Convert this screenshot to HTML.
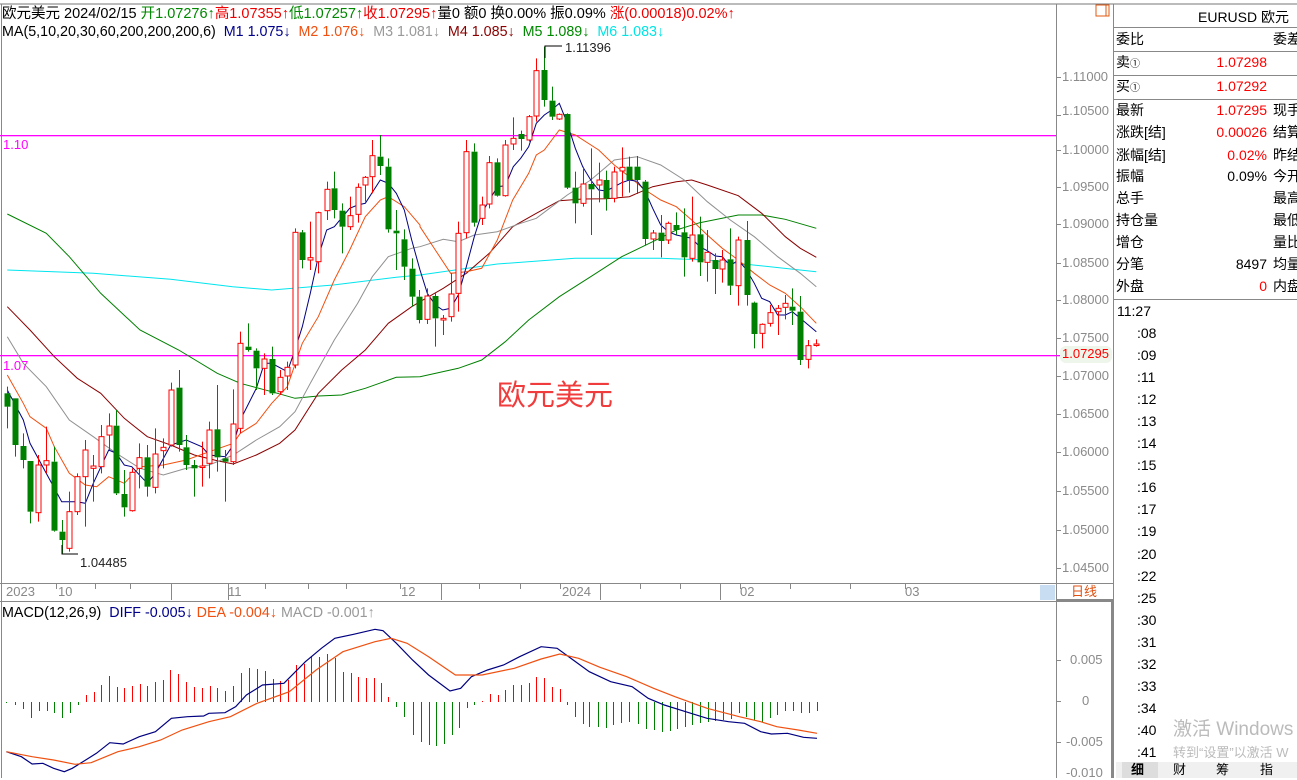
<!DOCTYPE html>
<html><head><meta charset="utf-8"><style>
*{margin:0;padding:0}
body{width:1297px;height:778px;background:#fff;overflow:hidden;position:relative;font-family:"Liberation Sans","Noto Sans CJK SC",sans-serif;font-size:13px;color:#000}
div{white-space:nowrap}
.a{position:absolute;white-space:nowrap;line-height:14px}
.ax{position:absolute;left:1062px;color:#8a8a8a;font-size:13px;line-height:14px}
.rp{position:absolute;left:1116px;font-size:14px;line-height:16px}
.rv{position:absolute;right:30px;font-size:14px;line-height:16px;text-align:right}
.rc{position:absolute;left:1273px;font-size:14px;line-height:16px;white-space:nowrap}
.t{position:absolute;left:1137px;font-size:14px;line-height:16px}
</style></head><body>
<svg id="sv" width="1297" height="778" style="position:absolute;left:0;top:0">
<line x1="0" y1="4" x2="1297" y2="4" stroke="#777" stroke-width="1"/>
<line x1="1.5" y1="4" x2="1.5" y2="778" stroke="#888"/>
<line x1="1056.5" y1="4" x2="1056.5" y2="778" stroke="#888"/>
<line x1="1113.5" y1="4" x2="1113.5" y2="778" stroke="#888"/>
<line x1="1113" y1="27.5" x2="1297" y2="27.5" stroke="#888"/>
<line x1="1113" y1="51.5" x2="1297" y2="51.5" stroke="#888"/>
<line x1="1113" y1="75.5" x2="1297" y2="75.5" stroke="#888"/>
<line x1="1113" y1="99.5" x2="1297" y2="99.5" stroke="#888"/>
<line x1="1113" y1="299.5" x2="1297" y2="299.5" stroke="#888"/>
<rect x="1096" y="5" width="13" height="11" fill="none" stroke="#e05a10"/>
<line x1="1106" y1="5" x2="1106" y2="16" stroke="#e05a10"/>
<line x1="0" y1="583.5" x2="1113" y2="583.5" stroke="#888"/>
<line x1="0" y1="601.5" x2="1113" y2="601.5" stroke="#888"/>
<line x1="1056" y1="600" x2="1113" y2="600" stroke="#888" stroke-width="2"/>
<line x1="1112" y1="600" x2="1112" y2="778" stroke="#888" stroke-width="2"/>
<rect x="1040" y="585" width="15" height="15" fill="#c9ddf2"/>
<rect x="0" y="135" width="1056" height="1.3" style="fill:#ff00ff"/>
<rect x="0" y="355" width="1062" height="1.3" style="fill:#ff00ff"/>
<rect x="1060" y="346" width="52" height="17" rx="6" fill="#eef5ea"/>
<g id="ticks" stroke="#888"></g>
<g id="ma" fill="none" stroke-width="1"></g>
<g id="cd"></g>
<g id="mc"></g>
<polyline points="545,58 545,46 562,46" fill="none" stroke="#000"/>
<polyline points="62,545 62,554 78,554" fill="none" stroke="#000"/>
<rect x="1116" y="762" width="181" height="16" fill="#f0f0f0"/>
<rect x="1122" y="762" width="36" height="16" fill="#ddd"/>
</svg>
<div class="a" style="left:2px;top:6px;font-size:14.5px;line-height:16px">欧元美元 2024/02/15 <span style="color:#080">开1.07276↑</span><span style="color:#e00">高1.07355↑</span><span style="color:#080">低1.07257↑</span><span style="color:#e00">收1.07295↑</span>量0 额0 换0.00% 振0.09% <span style="color:#e00">涨(0.00018)0.02%↑</span></div>
<div class="a" style="left:2px;top:24px;font-size:14.3px;line-height:16px">MA(5,10,20,30,60,200,200,200,6) &nbsp;<span style="color:#00008b">M1 1.075↓</span> &nbsp;<span style="color:#f05010">M2 1.076↓</span> &nbsp;<span style="color:#999">M3 1.081↓</span> &nbsp;<span style="color:#8b0000">M4 1.085↓</span> &nbsp;<span style="color:#080">M5 1.089↓</span> &nbsp;<span style="color:#00e5e5">M6 1.083↓</span></div>
<div class="a" style="left:565px;top:41px;color:#222">1.11396</div>
<div class="a" style="left:80px;top:556px;color:#222">1.04485</div>
<div class="a" style="left:3px;top:138px;color:#ff00ff">1.10</div>
<div class="a" style="left:3px;top:359px;color:#ff00ff">1.07</div>
<div class="a" style="left:497px;top:380px;color:#f03c3c;font-size:29px;line-height:32px">欧元美元</div>
<div class="ax" style="top:70px">1.11000</div><div class="ax" style="top:104px">1.10500</div><div class="ax" style="top:143px">1.10000</div><div class="ax" style="top:180px">1.09500</div><div class="ax" style="top:217px">1.09000</div><div class="ax" style="top:256px">1.08500</div><div class="ax" style="top:293px">1.08000</div><div class="ax" style="top:331px">1.07500</div><div class="ax" style="top:347px;color:#f00">1.07295</div><div class="ax" style="top:369px">1.07000</div><div class="ax" style="top:407px">1.06500</div><div class="ax" style="top:445px">1.06000</div><div class="ax" style="top:484px">1.05500</div><div class="ax" style="top:523px">1.05000</div><div class="ax" style="top:561px">1.04500</div>
<div class="a" style="left:1071px;top:585px;color:#e05010">日线</div>
<div class="ax" style="left:1070px;top:653px">0.005</div><div class="ax" style="left:1082px;top:694px">0</div><div class="ax" style="left:1066px;top:735px">-0.005</div><div class="ax" style="left:1066px;top:766px">-0.010</div>
<div class="a" style="left:6px;top:585px;color:#888">2023</div><div class="a" style="left:58px;top:585px;color:#888">10</div><div class="a" style="left:228px;top:585px;color:#888">11</div><div class="a" style="left:401px;top:585px;color:#888">12</div><div class="a" style="left:562px;top:585px;color:#888">2024</div><div class="a" style="left:740px;top:585px;color:#888">02</div><div class="a" style="left:905px;top:585px;color:#888">03</div>
<div class="a" style="left:2px;top:605px;font-size:14.3px;line-height:16px">MACD(12,26,9) &nbsp;<span style="color:#00008b">DIFF -0.005↓</span> <span style="color:#f05010">DEA -0.004↓</span> <span style="color:#999">MACD -0.001↑</span></div>
<div class="a" style="left:1198px;top:9px;font-size:14px;line-height:16px">EURUSD 欧元</div>
<div class="rp" style="top:31px">委比</div><div class="rc" style="top:31px">委差</div>
<div class="rp" style="top:54px">卖<span style="font-size:10px">①</span></div><div class="rv" style="top:54px;color:#f00">1.07298</div>
<div class="rp" style="top:78px">买<span style="font-size:10px">①</span></div><div class="rv" style="top:78px;color:#f00">1.07292</div>
<div class="rp" style="top:102px">最新</div><div class="rv" style="top:102px;color:#f00">1.07295</div><div class="rc" style="top:102px">现手</div>
<div class="rp" style="top:124px">涨跌[结]</div><div class="rv" style="top:124px;color:#f00">0.00026</div><div class="rc" style="top:124px">结算</div>
<div class="rp" style="top:147px">涨幅[结]</div><div class="rv" style="top:147px;color:#f00">0.02%</div><div class="rc" style="top:147px">昨结</div>
<div class="rp" style="top:168px">振幅</div><div class="rv" style="top:168px">0.09%</div><div class="rc" style="top:168px">今开</div>
<div class="rp" style="top:190px">总手</div><div class="rc" style="top:190px">最高</div>
<div class="rp" style="top:212px">持仓量</div><div class="rc" style="top:212px">最低</div>
<div class="rp" style="top:234px">增仓</div><div class="rc" style="top:234px">量比</div>
<div class="rp" style="top:256px">分笔</div><div class="rv" style="top:256px">8497</div><div class="rc" style="top:256px">均量</div>
<div class="rp" style="top:278px">外盘</div><div class="rv" style="top:278px;color:#f00">0</div><div class="rc" style="top:278px">内盘</div>
<div class="rp" style="left:1117px;top:303px">11:27</div>
<div id="tl"></div>
<div class="a" style="left:1173px;top:719px;color:#bbb;font-size:19px;line-height:22px">激活 Windows</div>
<div class="a" style="left:1173px;top:746px;color:#bbb;font-size:13px">转到“设置”以激活 W</div>
<div class="a" style="left:1131px;top:763px;font-size:13px;font-weight:bold">细</div>
<div class="a" style="left:1173px;top:763px;font-size:13px">财</div>
<div class="a" style="left:1216px;top:763px;font-size:13px">筹</div>
<div class="a" style="left:1260px;top:763px;font-size:13px">指</div>
<script>
var NS="http://www.w3.org/2000/svg";
function el(p,t,a){var e=document.createElementNS(NS,t);for(var k in a)e.setAttribute(k,a[k]);p.appendChild(e);return e;}
var tl=["08","09","11","12","13","14","15","16","17","19","20","22","25","30","31","32","33","34","40","41"],h="";
tl.forEach(function(s,i){h+='<div class="t" style="top:'+(325+i*22.05)+'px">:'+s+'</div>';});
document.getElementById("tl").innerHTML=h;
var tk=document.getElementById("ticks");
[77,115,150,187,224,263,300,338,376,414,452,491,530,568].forEach(function(y){el(tk,"line",{x1:1056,y1:y+.5,x2:1061,y2:y+.5});});
[660,701,742].forEach(function(y){el(tk,"line",{x1:1056,y1:y+.5,x2:1061,y2:y+.5});});
[56,95,130,171,228,265,308,346,400,441,479,520,560,600,640,680,720,740,790,850,905].forEach(function(x){el(tk,"line",{x1:x+.5,y1:584,x2:x+.5,y2:x%3==0?600:589});});
var A=[[22,0,1060,1100,1040,1165],[46,0,1075,1215,1075,1250],[70,0,1218,1260,1180,1285],[91,0,1263,1415,1263,1450],[115,1,1275,1418,1245,1445],[139,1,1262,1275,1160,1300],[163,0,1265,1472,1220,1475],[185,0,1475,1500,1440,1540],[208,1,1415,1525,1355,1535],[232,1,1310,1415,1300,1425],[256,1,1230,1310,1200,1460],[280,1,1278,1285,1245,1385],[302,1,1190,1280,1155,1300],[326,1,1158,1185,1120,1230],[349,0,1157,1360,1110,1365],[373,0,1362,1402,1290,1430],[395,1,1297,1412,1285,1415],[418,1,1253,1285,1210,1345],[442,0,1252,1340,1215,1370],[466,1,1242,1342,1165,1360],[490,1,1222,1232,1195,1285],[512,1,1050,1215,1028,1220],[536,0,1043,1215,990,1235],[559,0,1222,1275,1185,1290],[583,0,1275,1285,1260,1370],[605,1,1278,1282,1205,1340],[628,1,1170,1270,1145,1315],[652,0,1168,1252,1035,1295],[676,0,1255,1265,1230,1385],[700,1,1152,1265,1048,1275],[721,1,910,1165,875,1180],[745,0,920,930,850,935],[769,0,932,985,925,1050],[793,1,957,985,940,1065],[815,0,957,1060,920,1065],[839,1,1012,1055,990,1065],[862,1,982,1008,965,1050],[885,1,577,975,565,985],[907,0,577,660,570,685],[931,1,653,660,545,690],[955,1,518,665,515,700],[980,1,448,512,425,540],[1003,0,445,510,395,535],[1025,0,512,560,490,640],[1049,1,527,560,470,570],[1073,1,442,523,430,548],[1096,1,412,435,408,485],[1117,1,347,410,300,460],[1141,0,350,378,285,405],[1165,0,380,568,355,578],[1189,0,572,580,510,690],[1213,0,598,680,568,720],[1235,0,686,770,655,800],[1256,0,770,840,750,850]];
var B=[[22,1,768,838,745,852],[46,0,768,835,760,920],[68,1,835,840,825,885],[92,1,762,830,700,845],[115,1,580,760,545,815],[139,1,335,578,300,595],[163,0,335,548,310,560],[185,1,495,535,470,555],[208,1,368,492,348,505],[232,0,367,467,355,470],[256,1,315,467,300,470],[278,1,295,312,232,330],[302,0,282,297,272,332],[326,1,230,300,225,305],[349,1,92,228,55,245],[373,0,90,180,20,200],[395,0,182,230,140,240],[418,1,223,237,220,240],[442,0,222,443,220,447],[466,0,443,490,395,550],[488,1,432,490,380,500],[512,0,432,448,325,585],[536,1,420,435,368,487],[559,0,420,475,392,512],[583,1,396,475,380,487],[605,1,382,393,322,470],[628,0,380,420,350,458],[652,0,380,420,348,462],[676,0,425,597,420,617],[698,1,579,597,570,630],[722,0,578,603,525,652],[745,1,550,600,545,612],[769,0,555,570,517,585],[793,0,577,652,505,710],[815,1,585,655,470,665],[839,0,583,667,530,708],[862,1,637,667,570,725],[886,0,660,687,640,762],[907,1,660,687,630,728],[931,0,658,737,565,765],[955,1,600,737,590,797],[980,0,600,765,543,797],[1003,0,788,882,785,925],[1025,1,853,880,850,925],[1049,1,818,850,795,860],[1073,1,805,815,795,885],[1096,1,790,802,765,838],[1117,0,800,812,745,855],[1141,0,815,960,768,975],[1165,1,917,958,900,985],[1189,1,912,915,898,920]];
var cd=document.getElementById("cd");
function draw(arr,ox){arr.forEach(function(c){var x=Math.round(ox+c[0]/3)+.5,bt=40+c[2]/3,bb=40+c[3]/3,wt=40+c[4]/3,wb=40+c[5]/3;
var col=c[1]?"#ff0000":"#008000";
el(cd,"line",{x1:x,y1:wt,x2:x,y2:bt,stroke:col});el(cd,"line",{x1:x,y1:bb,x2:x,y2:wb,stroke:col});
if(bb-bt<1.5)bb=bt+1.5;
if(c[1])el(cd,"rect",{x:x-2.5,y:bt,width:5,height:bb-bt,fill:"#fff",stroke:col});else el(cd,"rect",{x:x-3,y:bt,width:6,height:bb-bt,fill:col});});}
draw(A,0);draw(B,420);
var ma=document.getElementById("ma");
function pl(a,b,col){var p=[];a.forEach(function(q){p.push((q[0]/3).toFixed(1)+","+(40+q[1]/3).toFixed(1));});b.forEach(function(q){p.push((420+q[0]/3).toFixed(1)+","+(40+q[1]/3).toFixed(1));});el(ma,"polyline",{points:p.join(" "),stroke:col});}
pl([[22,690],[280,700],[512,718],[698,740],[815,750],[1000,735],[1189,712],[1260,705]],[[0,705],[232,672],[465,655],[720,655],[860,660],[1000,675],[1189,695]],"#00e5ee");
pl([[22,522],[139,580],[208,650],[302,760],[420,870],[536,930],[652,1000],[721,1030],[815,1055],[885,1075],[955,1068],[1025,1065],[1096,1045],[1189,1012],[1260,1010]],[[0,1010],[115,985],[185,960],[256,905],[326,840],[418,770],[512,710],[605,650],[698,605],[769,570],[839,548],[955,525],[1025,525],[1096,538],[1189,565]],"#008000");
pl([[22,800],[90,870],[163,950],[232,1015],[302,1060],[373,1135],[442,1190],[512,1215],[583,1245],[652,1262],[700,1272],[769,1245],[839,1210],[885,1170],[955,1060],[1025,990],[1096,930],[1165,850],[1235,800],[1260,785]],[[0,785],[70,745],[139,700],[208,640],[278,560],[349,520],[418,482],[488,477],[559,476],[628,470],[698,440],[769,425],[815,420],[862,435],[955,467],[1025,520],[1096,590],[1141,625],[1189,652]],"#8b0000");
pl([[22,890],[70,970],[139,1040],[208,1140],[280,1190],[349,1240],[420,1285],[490,1305],[559,1285],[628,1275],[700,1245],[769,1200],[839,1160],[885,1115],[931,1030],[1003,900],[1073,790],[1117,710],[1165,650],[1235,625],[1260,620]],[[0,620],[70,598],[115,605],[163,585],[232,575],[302,550],[349,535],[395,500],[442,465],[512,420],[583,360],[652,350],[722,375],[793,420],[862,485],[931,540],[1003,590],[1073,650],[1141,700],[1189,740]],"#909090");
pl([[22,1005],[70,1090],[90,1130],[139,1165],[163,1220],[208,1300],[256,1335],[290,1340],[326,1310],[373,1330],[420,1280],[490,1275],[559,1260],[628,1235],[700,1210],[721,1180],[769,1150],[815,1090],[862,1040],[907,910],[955,830],[1003,720],[1049,630],[1096,530],[1141,480],[1165,470],[1213,500],[1260,555]],[[0,560],[46,630],[92,700],[139,695],[185,685],[232,600],[278,480],[326,400],[349,345],[373,330],[418,270],[466,285],[536,330],[583,375],[628,410],[676,450],[722,480],[769,500],[815,540],[862,585],[907,625],[955,660],[1003,700],[1049,735],[1096,760],[1141,800],[1189,850]],"#f05010");
pl([[22,1050],[70,1140],[90,1210],[185,1385],[230,1385],[256,1390],[280,1330],[326,1230],[349,1240],[373,1275],[395,1280],[442,1330],[466,1300],[512,1215],[559,1200],[605,1220],[628,1245],[676,1250],[700,1215],[721,1140],[769,1045],[793,970],[815,970],[862,995],[885,930],[907,860],[931,760],[955,650],[980,570],[1003,560],[1049,505],[1073,495],[1096,490],[1141,420],[1165,430],[1189,460],[1213,510],[1235,600],[1260,690]],[[0,690],[22,760],[46,795],[68,810],[92,805],[115,765],[139,680],[163,590],[185,520],[232,440],[256,437],[280,380],[302,355],[326,320],[349,250],[373,225],[395,210],[418,190],[442,250],[466,325],[488,380],[512,420],[536,450],[559,453],[583,440],[605,428],[628,420],[652,424],[676,455],[698,505],[722,555],[745,575],[769,585],[793,590],[815,595],[839,620],[862,632],[886,648],[907,650],[931,677],[955,660],[980,690],[1003,730],[1025,775],[1049,785],[1073,825],[1096,825],[1117,815],[1141,835],[1165,855],[1189,875]],"#000080");
var mc=document.getElementById("mc"),kx=840/1568;
var H=[[12,-1],[28,-3],[42,-7],[57,-16],[72,-9],[87,-9],[100,-11],[115,-16],[130,-11],[145,-3],[160,7],[175,10],[188,17],[203,26],[218,15],[232,14],[247,16],[262,18],[275,16],[290,20],[305,22],[318,32],[333,28],[348,20],[362,15],[377,14],[392,16],[405,14],[420,11],[435,16],[450,29],[465,34],[480,33],[495,31],[510,23],[522,21],[537,22],[552,37],[567,38],[580,46],[595,45],[610,48],[625,44],[640,30],[655,29],[668,25],[683,24],[698,24],[712,19],[725,5],[740,-5],[755,-15],[770,-33],[785,-40],[800,-43],[813,-44],[828,-42],[843,-33],[857,-26],[872,-6],[885,-3],[900,1],[915,8],[930,7],[943,12],[958,17],[972,17],[987,19],[1000,25],[1015,24],[1030,15],[1045,13],[1058,-3],[1073,-15],[1088,-22],[1100,-25],[1117,-25],[1131,-26],[1145,-23],[1160,-21],[1175,-20],[1190,-22],[1205,-27],[1220,-28],[1235,-30],[1250,-29],[1263,-27],[1278,-25],[1292,-23],[1307,-21],[1321,-20],[1335,-19],[1350,-18],[1365,-17],[1380,-11],[1393,-15],[1408,-18],[1422,-20],[1437,-16],[1450,-13],[1465,-9],[1480,-9],[1495,-11],[1510,-11],[1525,-9]];
H.forEach(function(b){var x=Math.round(b[0]*kx)+.5;el(mc,"line",{x1:x,y1:702,x2:x,y2:702-b[1],stroke:b[1]>0?"#ff0000":"#008000"});});
function ml(a,col){el(mc,"polyline",{points:a.map(function(q){return (q[0]*kx).toFixed(1)+","+(580+q[1]/3).toFixed(1);}).join(" "),fill:"none",stroke:col,"stroke-width":1.2});}
ml([[12,515],[40,530],[60,552],[80,550],[100,565],[120,575],[135,565],[160,540],[180,520],[205,488],[230,492],[260,470],[290,455],[320,415],[350,410],[380,408],[390,400],[420,398],[440,380],[460,345],[490,315],[530,310],[570,245],[600,205],[625,175],[660,163],[700,148],[715,152],[740,190],[770,240],[800,285],[840,333],[860,325],[880,290],[910,270],[940,255],[970,230],[1010,200],[1040,205],[1070,240],[1100,275],[1140,305],[1180,320],[1210,355],[1240,375],[1280,395],[1320,415],[1360,425],[1390,430],[1420,455],[1440,462],[1470,460],[1500,472],[1525,475]],"#000080");
ml([[12,515],[60,530],[100,540],[140,553],[170,548],[220,515],[260,500],[300,480],[340,450],[390,425],[430,410],[480,370],[540,335],[590,270],[640,215],[700,185],[730,175],[760,190],[800,230],[850,285],[900,285],[960,265],[1010,237],[1045,222],[1080,235],[1120,262],[1170,290],[1220,325],[1260,350],[1320,385],[1380,410],[1420,425],[1450,440],[1490,450],[1525,460]],"#f05010");
</script>
</body></html>
